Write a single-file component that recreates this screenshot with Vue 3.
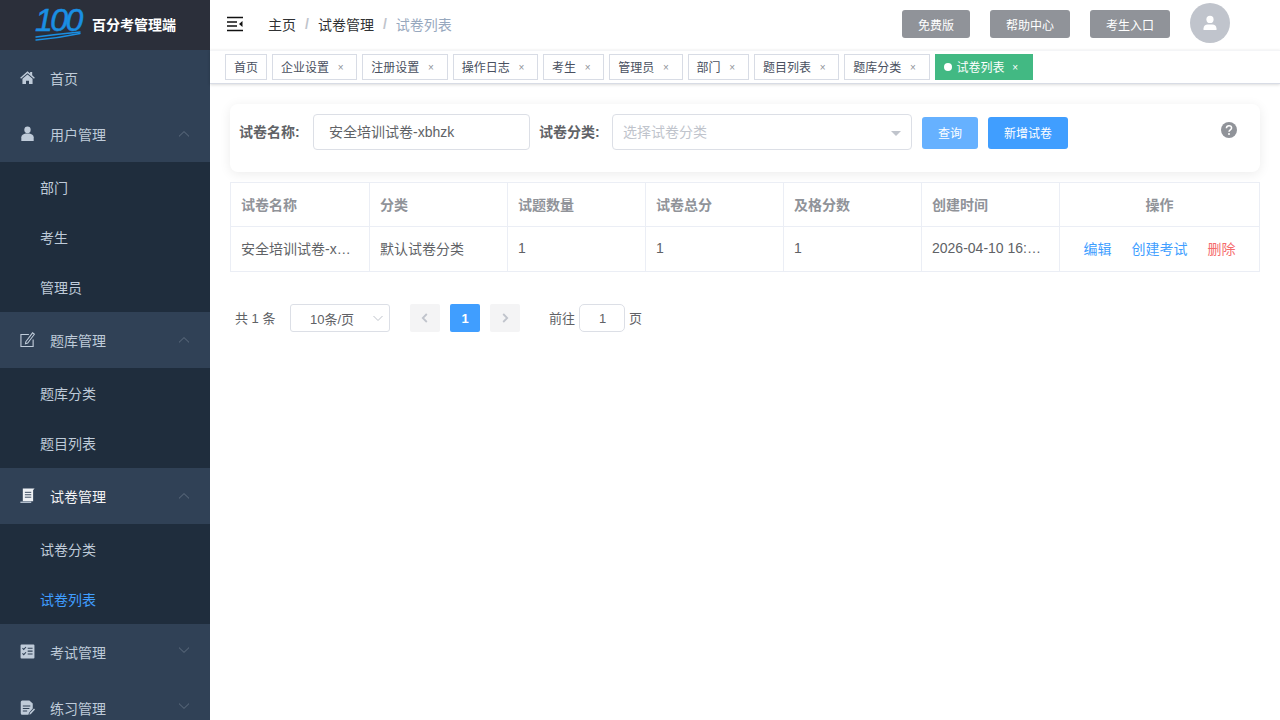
<script setup>
const tags = [
  { name: '首页' },
  { name: '企业设置', close: true },
  { name: '注册设置', close: true },
  { name: '操作日志', close: true },
  { name: '考生', close: true },
  { name: '管理员', close: true },
  { name: '部门', close: true },
  { name: '题目列表', close: true },
  { name: '题库分类', close: true },
  { name: '试卷列表', close: true, active: true }
]
</script>

<template>
  <div class="app">
    <aside class="sidebar">
      <div class="logo">
        <svg class="logo-mark" viewBox="0 -3 50 46" width="50" height="46">
          <text x="0" y="26" class="logo-num">100</text>
          <path d="M1 32 Q24 29 45 27" fill="none" stroke="#1a8fe3" stroke-width="1.4" stroke-linecap="round" />
          <path d="M1 35 Q24 33 45 28.5" fill="none" stroke="#1a8fe3" stroke-width="1.4" stroke-linecap="round" />
        </svg>
        <span class="logo-title">百分考管理端</span>
      </div>

      <div class="menu-item">
        <svg class="mi" viewBox="0 0 16 16"><path d="M8 1.4 .2 8.2l.9 1L8 3.4l6.9 5.8.9-1L13 5.6V2h-2.2v1.7Z" fill="#bfcbd9"/><path d="M2.6 9.4 8 4.8l5.4 4.6V15H9.6v-3.6H6.4V15H2.6Z" fill="#bfcbd9"/></svg>
        <span>首页</span>
      </div>

      <div class="menu-item">
        <svg class="mi" viewBox="0 0 16 16"><ellipse cx="8" cy="4" rx="3.4" ry="3.6" fill="#bfcbd9"/><path d="M1.4 16v-4c0-2.4 2.4-3.6 4.6-4h4c2.2.4 4.6 1.6 4.6 4v4Z" fill="#bfcbd9"/></svg>
        <span>用户管理</span>
        <svg class="arrow" viewBox="0 0 12 12"><path d="M1 8.4 6 3.6l5 4.8" /></svg>
      </div>
      <div class="sub-item">部门</div>
      <div class="sub-item">考生</div>
      <div class="sub-item">管理员</div>

      <div class="menu-item">
        <svg class="mi" viewBox="0 0 16 16"><path d="M9.5 2.6H1v13h13V8" fill="none" stroke="#bfcbd9" stroke-width="1.2"/><path d="M6.2 10.4 13.4.9l2 1.5-7.2 9.4-2.4.8Z" fill="none" stroke="#bfcbd9" stroke-width="1.1"/></svg>
        <span>题库管理</span>
        <svg class="arrow" viewBox="0 0 12 12"><path d="M1 8.4 6 3.6l5 4.8" /></svg>
      </div>
      <div class="sub-item">题库分类</div>
      <div class="sub-item">题目列表</div>

      <div class="menu-item active-parent">
        <svg class="mi" viewBox="0 0 16 16"><path d="M3 .6h12.6l-1.6 1.6V14H3Z" fill="#eef1f5"/><path d="M5.2 4.6H12M5.2 7.2H12M5.2 9.8H12" stroke="#304156" stroke-width="1"/><path d="M.4 15.2h11.6" stroke="#bfcbd9" stroke-width="1.4"/></svg>
        <span>试卷管理</span>
        <svg class="arrow" viewBox="0 0 12 12"><path d="M1 8.4 6 3.6l5 4.8" /></svg>
      </div>
      <div class="sub-item">试卷分类</div>
      <div class="sub-item current">试卷列表</div>

      <div class="menu-item">
        <svg class="mi" viewBox="0 0 16 16"><rect x=".6" y=".6" width="14.8" height="14.8" rx="1" fill="#bfcbd9"/><path d="M2.6 4.4 4 5.8l2.4-2.6M2.6 10l1.4 1.4L6.4 8.8" fill="none" stroke="#304156" stroke-width="1.1"/><path d="M8.2 4.6h5.2M8.2 7.6h5.2M8.2 10.6h5.2" stroke="#304156" stroke-width="1.1"/></svg>
        <span>考试管理</span>
        <svg class="arrow down" viewBox="0 0 12 12"><path d="M1 3.6 6 8.4l5-4.8" /></svg>
      </div>
      <div class="menu-item">
        <svg class="mi" viewBox="0 0 16 16"><path d="M.8 2A1.6 1.6 0 0 1 2.4.4H10l3.6 3.4V9l-4 4.6-.6 2H2.4A1.6 1.6 0 0 1 .8 14Z" fill="#bfcbd9"/><path d="M3 6.4h8M3 9h7M3 11.8h4.6" stroke="#304156" stroke-width="1.1"/><path d="M10 15.6l.5-2 4.4-4.6 1.1 1.1-4.4 4.7Z" fill="#bfcbd9"/></svg>
        <span>练习管理</span>
        <svg class="arrow down" viewBox="0 0 12 12"><path d="M1 3.6 6 8.4l5-4.8" /></svg>
      </div>
    </aside>

    <main class="main">
      <header class="navbar">
        <svg class="hamburger" viewBox="0 0 16 16" width="16" height="16"><path d="M0 1.5h16M0 14.5h16" stroke="#111" stroke-width="1.6"/><path d="M0 6h10M0 10h10" stroke="#111" stroke-width="1.6"/><path d="M15.5 5v6L12 8Z" fill="#111"/></svg>
        <nav class="crumbs">
          <span class="crumb">主页</span><i>/</i>
          <span class="crumb">试卷管理</span><i>/</i>
          <span class="crumb last">试卷列表</span>
        </nav>
        <div class="nav-right">
          <button class="grey-btn w68">免费版</button>
          <button class="grey-btn w80">帮助中心</button>
          <button class="grey-btn w80">考生入口</button>
          <div class="avatar">
            <svg viewBox="0 0 16 16" width="16" height="16"><circle cx="8" cy="4.4" r="3.6" fill="#fff"/><path d="M1.5 15v-1.5c0-2.6 2-4 4-4h5c2 0 4 1.4 4 4V15Z" fill="#fff"/></svg>
          </div>
        </div>
      </header>

      <div class="tags">
        <div v-for="t in tags" :key="t.name" class="tag" :class="{ on: t.active }">
          <span v-if="t.active" class="dot"></span>
          <span class="tag-name">{{ t.name }}</span>
          <span v-if="t.close" class="x">×</span>
        </div>
      </div>

      <section class="content">
        <div class="filter">
          <label class="lbl first">试卷名称:</label>
          <div class="input name-input">安全培训试卷-xbhzk</div>
          <label class="lbl second">试卷分类:</label>
          <div class="input cat-input">
            <span class="ph">选择试卷分类</span>
            <span class="caret"></span>
          </div>
          <button class="btn light">查询</button>
          <button class="btn primary">新增试卷</button>
          <svg class="help" viewBox="0 0 16 16" width="16" height="16"><circle cx="8" cy="8" r="8" fill="#909399"/><path d="M5.4 6.2A2.6 2.6 0 0 1 8 3.8c1.5 0 2.6 1 2.6 2.2 0 1.9-2.6 1.9-2.6 3.8" fill="none" stroke="#fff" stroke-width="1.5"/><circle cx="8" cy="12" r="1" fill="#fff"/></svg>
        </div>

        <div class="table">
          <div class="cell head">试卷名称</div>
          <div class="cell head">分类</div>
          <div class="cell head">试题数量</div>
          <div class="cell head">试卷总分</div>
          <div class="cell head">及格分数</div>
          <div class="cell head">创建时间</div>
          <div class="cell head center">操作</div>

          <div class="cell"><span class="ell">安全培训试卷-xbhzk</span></div>
          <div class="cell">默认试卷分类</div>
          <div class="cell">1</div>
          <div class="cell">1</div>
          <div class="cell">1</div>
          <div class="cell"><span class="ell">2026-04-10 16:30:25</span></div>
          <div class="cell center ops">
            <a class="blue">编辑</a><a class="blue">创建考试</a><a class="red">删除</a>
          </div>
        </div>

        <div class="pager">
          <span class="total">共 1 条</span>
          <div class="size">
            <span>10条/页</span>
            <svg viewBox="0 0 12 12" width="12" height="12"><path d="M1.5 4 6 8.5 10.5 4" fill="none" stroke="#c0c4cc" stroke-width="1"/></svg>
          </div>
          <div class="pg nav">
            <svg viewBox="0 0 12 12" width="12" height="12"><path d="M7.8 2 3.8 6l4 4" fill="none" stroke="#c0c4cc" stroke-width="1.8"/></svg>
          </div>
          <div class="pg cur">1</div>
          <div class="pg nav">
            <svg viewBox="0 0 12 12" width="12" height="12"><path d="M4.2 2l4 4-4 4" fill="none" stroke="#c0c4cc" stroke-width="1.8"/></svg>
          </div>
          <span class="goto">前往</span>
          <div class="jump">1</div>
          <span class="unit">页</span>
        </div>
      </section>
    </main>
  </div>
</template>

<style>
html, body { margin: 0; height: 100%; overflow: hidden; background: #fff; }
</style>

<style scoped>
.app {
  display: flex;
  width: 1280px;
  height: 720px;
  overflow: hidden;
  font-family: "Liberation Sans", "Noto Sans CJK SC", sans-serif;
  color: #606266;
  font-size: 14px;
}
.sidebar { width: 210px; flex: none; background: #304156; height: 720px; overflow: hidden; }
.logo { height: 50px; background: #2b2f3a; display: flex; align-items: center; padding-left: 35px; box-sizing: border-box; }
.logo-mark { flex: none; margin-right: 7px; }
.logo-num { font: italic 400 32px "Liberation Sans", sans-serif; fill: #1a8fe3; stroke: #1a8fe3; stroke-width: .5px; letter-spacing: -2.6px; }
.logo-title { color: #fff; font-weight: 700; font-size: 14px; margin-top: -2px; }

.menu-item { height: 56px; display: flex; align-items: center; padding-left: 20px; padding-right: 20px; color: #bfcbd9; box-sizing: border-box; }
.menu-item > span { margin-left: 15px; flex: 1; }
.mi { width: 15px; height: 15px; margin-top: -2px; flex: none; }
.active-parent { color: #f4f4f5; }
.arrow { width: 12px; height: 12px; flex: none; fill: none; stroke: #5f6e80; stroke-width: 1; }
.arrow.down { margin-top: -4px; }
.sub-item { height: 50px; line-height: 52px; padding-left: 40px; background: #1f2d3d; color: #bfcbd9; }
.sub-item.current { color: #409eff; }

.main { flex: 1; min-width: 0; }
.navbar { height: 50px; display: flex; align-items: center; padding-left: 17px; box-sizing: border-box; }
.hamburger { flex: none; margin-top: -2px; }
.crumbs { margin-left: 25px; margin-top: -2px; color: #303133; display: flex; align-items: center; }
.crumbs i { font-style: normal; color: #c0c4cc; font-weight: 700; margin: 0 9px; }
.crumb.last { color: #97a8be; }
.nav-right { margin-left: auto; display: flex; align-items: center; padding-right: 50px; }
.grey-btn { height: 28px; border: 0; border-radius: 3px; background: #909399; color: #fff; font: inherit; font-size: 12px; margin-right: 20px; padding: 0; margin-top: -2px; }
.w68 { width: 68px; }
.w80 { width: 80px; }
.avatar { width: 40px; height: 40px; border-radius: 50%; background: #c0c4cc; display: flex; align-items: center; justify-content: center; margin-top: -4px; }

.tags {
  height: 34px;
  box-sizing: border-box;
  padding: 3px 15px 0;
  display: flex;
  gap: 5px;
  background: #fff;
  border-top: 1px solid #f4f5f7;
  border-bottom: 1px solid #d8dce5;
  box-shadow: 0 1px 3px 0 rgba(0,0,0,.12), 0 0 3px 0 rgba(0,0,0,.04);
}
.tag { height: 26px; box-sizing: border-box; border: 1px solid #d8dce5; padding: 0 8px; font-size: 12px; line-height: 24px; color: #495060; display: flex; align-items: center; white-space: nowrap; }
.tag-name { padding-top: 1px; }
.tag .x { margin-left: 8px; color: #909399; font-size: 10px; width: 7.3px; text-align: center; margin-right: 4px; margin-top: 2px; }
.tag.on { background: #42b983; border-color: #42b983; color: #fff; }
.tag.on .x { color: #fff; margin-left: 7px; margin-right: 5px; }
.dot { width: 8px; height: 8px; border-radius: 50%; background: #fff; margin-right: 5px; }

.content { padding: 20px; }
.filter {
  height: 68px;
  box-sizing: border-box;
  border-radius: 8px;
  box-shadow: 0 2px 12px rgba(0,0,0,.08);
  display: flex;
  align-items: flex-start;
  padding: 10px 10px 0;
}
.lbl { font-weight: 700; line-height: 36px; color: #606266; flex: none; white-space: nowrap; width: 73px; }
.lbl.first { margin-left: -1px; width: 74px; }
.lbl.second { margin-left: 9px; }
.input { height: 36px; box-sizing: border-box; border: 1px solid #dcdfe6; border-radius: 4px; line-height: 34px; flex: none; display: flex; align-items: center; }
.name-input { width: 217px; padding-left: 15px; }
.cat-input { width: 300px; padding: 0 10px; justify-content: space-between; }
.ph { color: #c0c4cc; }
.caret { width: 0; height: 0; border-left: 5px solid transparent; border-right: 5px solid transparent; border-top: 5px solid #c0c4cc; margin-top: 3px; }
.btn { height: 32px; border: 0; border-radius: 3px; color: #fff; font: inherit; font-size: 12px; margin-left: 10px; margin-top: 3px; padding: 0 0 1px; flex: none; }
.btn.light { background: #66b1ff; width: 56px; }
.btn.primary { background: #409eff; width: 80px; }
.help { margin-left: auto; margin-top: 8px; margin-right: 13px; flex: none; }

.table {
  margin-top: 10px;
  display: grid;
  grid-template-columns: 139px 138px 138px 138px 138px 138px 200px;
  grid-template-rows: 44px 45px;
  width: 1030px;
  box-sizing: border-box;
  border-top: 1px solid #ebeef5;
  border-left: 1px solid #ebeef5;
}
.cell {
  box-sizing: border-box;
  border-right: 1px solid #ebeef5;
  border-bottom: 1px solid #ebeef5;
  padding: 0 10px 2px;
  display: flex;
  align-items: center;
  min-width: 0;
}
.cell.head { color: #909399; font-weight: 700; padding-bottom: 1px; }
.center { justify-content: center; }
.ell { display: block; max-width: 112px; overflow: hidden; white-space: nowrap; text-overflow: ellipsis; }
.ops { gap: 20px; }
.blue { color: #409eff; }
.red { color: #f56c6c; }

.pager { margin-top: 32px; height: 28px; display: flex; align-items: center; font-size: 13px; color: #606266; padding-left: 5px; }
.total { width: 55px; flex: none; margin-top: -2px; }
.size { width: 100px; height: 28px; box-sizing: border-box; border: 1px solid #dcdfe6; border-radius: 3px; display: flex; align-items: center; justify-content: space-between; padding: 0 5px 0 19px; flex: none; }
.pg { width: 30px; height: 28px; border-radius: 2px; display: flex; align-items: center; justify-content: center; flex: none; margin-right: 10px; font-weight: 700; }
.size + .pg { margin-left: 20px; }
.pg.nav { background: #f4f4f5; }
.pg.cur { background: #409eff; color: #fff; }
.goto { margin-left: 19px; flex: none; margin-top: -1px; }
.jump { width: 46px; height: 28px; box-sizing: border-box; border: 1px solid #dcdfe6; border-radius: 5px; text-align: center; line-height: 28px; margin: 0 4px; padding-left: 1px; flex: none; }
.unit { flex: none; margin-top: -1px; }
</style>
